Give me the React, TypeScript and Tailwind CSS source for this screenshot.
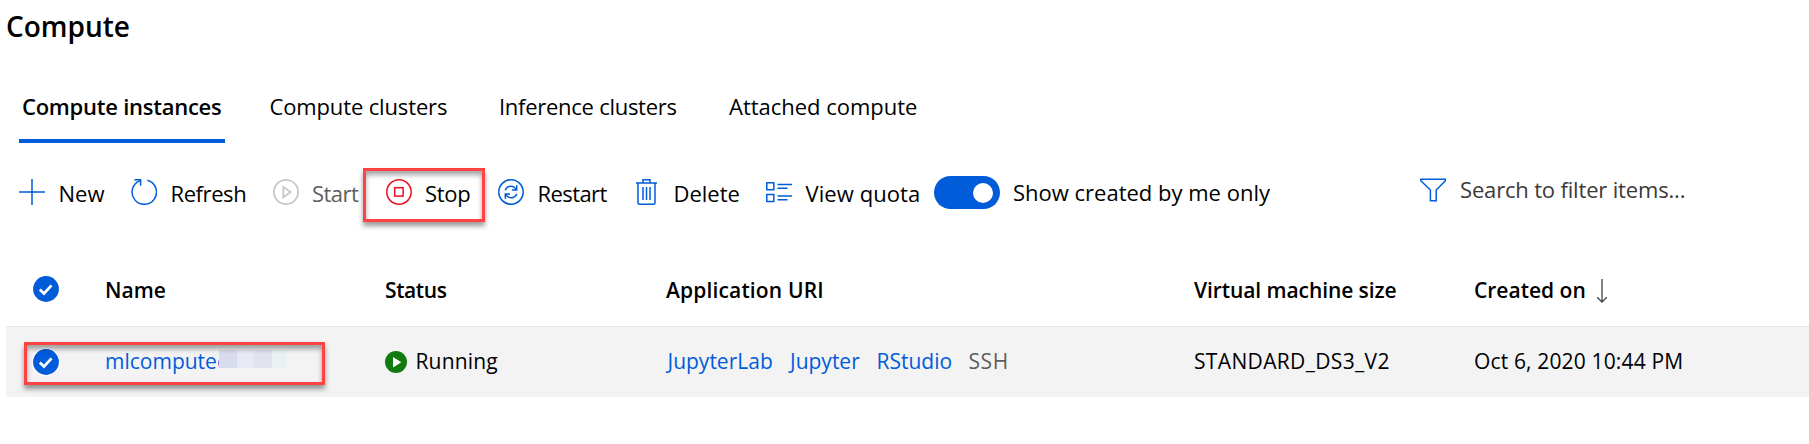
import React from "react";

type IconProps = { className?: string };

const stroke = { fill: "none", stroke: "currentColor", strokeWidth: 1.5 } as const;

const AddIcon = ({ className = "" }: IconProps) => (
  <svg viewBox="0 0 26 26" className={`size-[26px] shrink-0 ${className}`} {...stroke}>
    <path d="M13 0v26M0 13h26" />
  </svg>
);

const RefreshIcon = ({ className = "" }: IconProps) => (
  <svg viewBox="0 0 26 26" className={`size-[26px] shrink-0 ${className}`} {...stroke}>
    <path d="M16.4 1.3A12.2 12.2 0 1 1 9.2 1.6" />
    <path d="M3.4 .8h6.2v6" />
  </svg>
);

const StartIcon = ({ className = "" }: IconProps) => (
  <svg viewBox="0 0 26 26" className={`size-[26px] shrink-0 ${className}`} fill="none" stroke="currentColor" strokeWidth="1.8">
    <circle cx="13" cy="13" r="12.1" />
    <path d="M10.3 8v10.2L17.6 13z" />
  </svg>
);

const StopIcon = ({ className = "" }: IconProps) => (
  <svg viewBox="0 0 26 26" className={`size-[26px] shrink-0 ${className}`} {...stroke}>
    <circle cx="13" cy="13" r="12.2" />
    <rect x="8.7" y="8.7" width="8.4" height="8.4" />
  </svg>
);

const RestartIcon = ({ className = "" }: IconProps) => (
  <svg viewBox="0 0 26 26" className={`size-[26px] shrink-0 ${className}`} {...stroke}>
    <circle cx="13" cy="13" r="12.2" />
    <path d="M7.2 11.2C9.2 6 15.6 5.8 18.3 10.7M18.7 6.3v4.7h-4.8" />
    <path d="M18.8 14.8c-2 5.2-8.4 5.4-11.1.5M7.3 19.7V15h4.8" />
  </svg>
);

const DeleteIcon = ({ className = "" }: IconProps) => (
  <svg viewBox="0 0 26 26" className={`size-[26px] shrink-0 ${className}`} {...stroke}>
    <path d="M2 4h21M9 4V.8h7V4M4 4v19.7q0 1.5 1.5 1.5h14q1.5 0 1.5-1.5V4M9 8v13M12.5 8v13M16 8v13" />
  </svg>
);

const QuotaIcon = ({ className = "" }: IconProps) => (
  <svg viewBox="0 0 26 26" className={`size-[26px] shrink-0 ${className}`} {...stroke}>
    <path d="M.8 3.8h7v7h-7zM.8 15.600h7v7h-7zM11.5 5.5H26M11.5 9.2h10M11.5 17H26M11.5 20.7h10" />
  </svg>
);

const FilterIcon = () => (
  <svg viewBox="0 0 26 24" className="h-6 w-[26px] shrink-0 text-[#015cda]" {...stroke}>
    <path d="M.8 1.3h24.600v1.5L16.2 12v10.8h-5.8V12L.8 2.8z" />
  </svg>
);

const CheckCircle = ({ ring = false }: { ring?: boolean }) => (
  <svg viewBox="0 0 28 28" className="size-7 shrink-0">
    {ring && <circle cx="14" cy="14" r="14" fill="#fff" />}
    <circle cx="14" cy="14" r="12.9" fill="#015cda" />
    <path d="M7.8 14.5l4.2 4 7.5-8.2" fill="none" stroke="#fff" strokeWidth="2.7" />
  </svg>
);

const RunningIcon = () => (
  <svg viewBox="0 0 22 22" className="size-[22px] shrink-0">
    <circle cx="11" cy="11" r="11" fill="#107c10" />
    <path d="M8 6v10.4l8.3-5.2z" fill="#fff" />
  </svg>
);

const SortDownIcon = () => (
  <svg viewBox="0 0 12 24" className="h-6 w-3 shrink-0 text-[#444]" fill="none" stroke="currentColor" strokeWidth="1.3">
    <path d="M6 0v23M1.2 18.3L6 23l4.8-4.7" />
  </svg>
);

const tabs = [
  { label: "Compute clusters", cls: "w-[229.5px] tracking-[-0.14px]" },
  { label: "Inference clusters", cls: "w-[230px] tracking-[-0.27px]" },
  { label: "Attached compute", cls: "tracking-[-0.02px]" },
];

const commands = [
  { label: "New", Icon: AddIcon, width: "w-[112px]", icon: "text-[#015cda]", text: "" },
  { label: "Refresh", Icon: RefreshIcon, width: "w-[141.5px]", icon: "text-[#015cda]", text: "tracking-[-0.42px]" },
  { label: "Start", Icon: StartIcon, width: "w-[113px]", icon: "text-[#c8c8c8]", text: "tracking-[-0.53px] text-[#605e5c]" },
  { label: "Stop", Icon: StopIcon, width: "w-[112.5px]", icon: "text-[#e81123]", text: "tracking-[-0.3px]" },
  { label: "Restart", Icon: RestartIcon, width: "w-[136px]", icon: "text-[#015cda]", text: "tracking-[-0.58px]" },
  { label: "Delete", Icon: DeleteIcon, width: "w-[132px]", icon: "text-[#015cda]", text: "" },
  { label: "View quota", Icon: QuotaIcon, width: "w-[168px]", icon: "text-[#015cda]", text: "tracking-[0.08px]" },
];

const grid = "grid grid-cols-[99px_280px_281px_528px_280px_1fr] items-center";

export default function App() {
  return (
    <main className="relative h-[444px] w-full overflow-hidden bg-white font-['Open_Sans','Noto_Sans',sans-serif] text-[22px] whitespace-nowrap text-black">
      <h1 className="h-[74px] pt-1.5 pl-[6px] text-[28px] leading-10 font-semibold">Compute</h1>

      <nav className="flex h-[69px] pl-[19px]">
        <button className="mr-[44.5px] flex w-[206px] items-center border-b-4 border-[#015cda] pl-[3px] font-semibold tracking-[-0.25px]">
          Compute instances
        </button>
        {tabs.map((t) => (
          <button key={t.label} className={`flex items-center pb-1 text-left ${t.cls}`}>
            {t.label}
          </button>
        ))}
      </nav>

      <div className="flex h-[100px] items-center pb-px pl-[19px]">
        {commands.map(({ label, Icon, width, icon, text }) => (
          <button key={label} className={`mb-px flex shrink-0 items-center gap-[13.5px] ${width}`}>
            <Icon className={icon} />
            <span className={`pt-0.5 leading-[30px] ${text}`}>{label}</span>
          </button>
        ))}
        <div className="flex w-[486px] shrink-0 items-center gap-[13px]">
          <span className="flex h-[33px] w-[66px] items-center justify-end rounded-full bg-[#015cda] pr-[7px]">
            <span className="size-5 rounded-full bg-white" />
          </span>
          <span>Show created by me only</span>
        </div>
        <div className="flex items-center gap-[14px] pb-1.5 text-[#3b3a39]">
          <FilterIcon />
          <span className="tracking-[-0.17px]">Search to filter items...</span>
        </div>
      </div>

      <section className="mt-[11px] ml-[6px] text-[21px]">
        <div className={`${grid} h-[72px] font-semibold`}>
          <span className="pb-0.5 pl-[25.5px]">
            <CheckCircle />
          </span>
          <span className="pt-0.5">Name</span>
          <span className="pt-0.5 tracking-[-0.4px]">Status</span>
          <span className="pt-0.5 tracking-[0.15px]">Application URI</span>
          <span className="pt-0.5 tracking-[-0.08px]">Virtual machine size</span>
          <span className="flex items-center gap-2.5 pt-0.5">
            Created on <SortDownIcon />
          </span>
        </div>
        <div className={`${grid} h-[71px] border-t border-[#e6e6e6] bg-[#f3f3f3]`}>
          <span className="pb-px pl-[25.5px]">
            <CheckCircle ring />
          </span>
          <span className="flex items-center">
            <a className="w-[114px] overflow-hidden text-[#015cda]">mlcomputec</a>
            <span className="mb-[7px] flex h-[18px]">
              <i className="w-[18px] bg-[#d9dbee]" />
              <i className="w-[17px] bg-[#e7e9f3]" />
              <i className="w-[18px] bg-[#e0e3ee]" />
              <i className="w-[15px] bg-[#e9f2f1]" />
            </span>
          </span>
          <span className="flex items-center gap-[8.5px] tracking-[0.15px]">
            <RunningIcon />
            Running
          </span>
          <span className="flex">
            <a className="w-[123px] pl-[1.5px] text-[#015cda]">JupyterLab</a>
            <a className="w-[87.5px] pl-px text-[#015cda]">Jupyter</a>
            <a className="w-[92px] text-[#015cda]">RStudio</a>
            <span className="tracking-[0.6px] text-[#605e5c]">SSH</span>
          </span>
          <span className="tracking-[0.35px]">STANDARD_DS3_V2</span>
          <span className="tracking-[0.15px]">Oct 6, 2020 10:44 PM</span>
        </div>
      </section>

      <div className="pointer-events-none absolute top-[168px] left-[363px] h-[54px] w-[122px] border-3 border-[#ff4343] shadow-[0_4px_5px_rgba(0,0,0,0.4),inset_0_4px_5px_rgba(0,0,0,0.35)]" />
      <div className="pointer-events-none absolute top-[342px] left-[24px] h-[43px] w-[301px] border-3 border-[#ff4343] shadow-[0_4px_5px_rgba(0,0,0,0.4),inset_0_4px_5px_rgba(0,0,0,0.35)]" />
    </main>
  );
}
